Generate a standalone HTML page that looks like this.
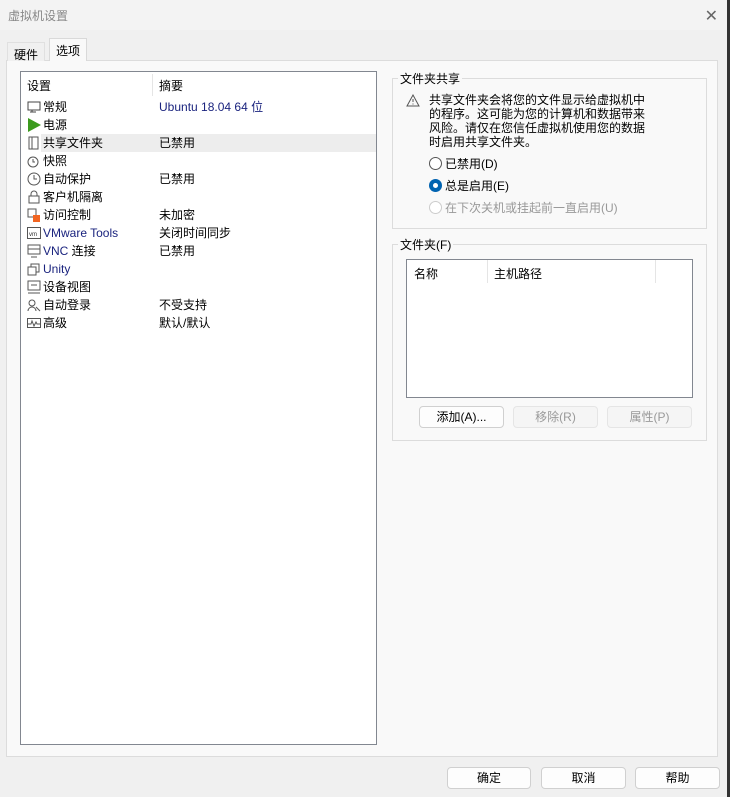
<!DOCTYPE html>
<html><head><meta charset="utf-8"><style>
*{margin:0;padding:0;box-sizing:border-box}
body{width:730px;height:797px;background:#f0f0f0;font:12px "Liberation Sans","Noto Sans CJK SC",sans-serif;color:#000;position:relative;overflow:hidden}
.a{position:absolute}
.title{left:0;top:0;width:730px;height:30px;background:#f3f3f3}
.title span{position:absolute;left:8px;top:7px;color:#888;font-size:12px}
.close{right:12px;top:6px;font-size:16px;color:#666}
.tab{top:40px;height:21px;padding:3px 6px;border:1px solid #d9d9d9;border-bottom:none;background:#f0f0f0}
.panel{left:6px;top:60px;width:712px;height:697px;background:#f9f9f9;border:1px solid #dcdcdc}
.list{left:20px;top:71px;width:357px;height:674px;background:#fff;border:1px solid #828790}
.row{position:absolute;left:0;width:355px;height:18px;line-height:18px}
.row .n{position:absolute;left:22px}
.row .s{position:absolute;left:138px}
.row .ic{position:absolute;left:6px;top:2px;width:14px;height:14px}
.grp{border:1px solid #dcdcdc}
.gl{background:#f9f9f9;padding:0 2px}
.btn{background:#fdfdfd;border:1px solid #d0d0d0;border-radius:4px;text-align:center;line-height:20px;height:22px}
.dis{background:#f5f5f5;color:#999;border-color:#e5e5e5}
.rad{width:13px;height:13px;border-radius:50%;border:1px solid #555;background:#fff}
</style></head><body>
<div class="a title"><span>虚拟机设置</span></div>
<div class="a close">✕</div>
<div class="a panel"></div>
<div class="a tab" style="left:7px;top:42px;height:19px;border-color:#e0e0e0">硬件</div>
<div class="a tab" style="left:49px;top:38px;height:23px;background:#f9f9f9;padding-top:3px">选项</div>
<div class="a list">
 <div class="row" style="top:5px"><span class="s" style="left:6px">设置</span><span class="s">摘要</span></div>
 <div class="a" style="left:131px;top:2px;width:1px;height:22px;background:#e5e5e5"></div>
 <div class="row" style="top:26px"><svg class="ic" viewBox="0 0 14 14"><rect x="1" y="2" width="12" height="8" fill="none" stroke="#444"/><path d="M3 12h6M5 10v2" stroke="#444"/></svg><span class="n">常规</span><span class="s" style="color:#1a237e">Ubuntu 18.04 64 位</span></div>
 <div class="row" style="top:44px"><svg class="ic" viewBox="0 0 14 14"><path d="M1 0L14 7L1 14Z" fill="#3c9a1e"/></svg><span class="n">电源</span></div>
 <div class="row" style="top:62px;background:#ededed;left:20px;width:335px"></div>
 <div class="row" style="top:62px"><svg class="ic" viewBox="0 0 14 14"><path d="M2 1h9v12H2zM5 1v12" fill="none" stroke="#555"/></svg><span class="n">共享文件夹</span><span class="s">已禁用</span></div>
 <div class="row" style="top:80px"><svg class="ic" viewBox="0 0 14 14"><circle cx="6" cy="8" r="5" fill="none" stroke="#555"/><path d="M6 5v3h2" stroke="#555" fill="none"/></svg><span class="n">快照</span></div>
 <div class="row" style="top:98px"><svg class="ic" viewBox="0 0 14 14"><circle cx="7" cy="7" r="6" fill="none" stroke="#555"/><path d="M7 3v4h3" stroke="#555" fill="none"/></svg><span class="n">自动保护</span><span class="s">已禁用</span></div>
 <div class="row" style="top:116px"><svg class="ic" viewBox="0 0 14 14"><rect x="2" y="6" width="10" height="7" fill="none" stroke="#555"/><path d="M4 6V4a3 3 0 0 1 6 0v2" fill="none" stroke="#555"/></svg><span class="n">客户机隔离</span></div>
 <div class="row" style="top:134px"><svg class="ic" viewBox="0 0 14 14"><path d="M1 1h8v8H1z" fill="none" stroke="#555"/><rect x="6" y="7" width="7" height="7" fill="#f26522"/></svg><span class="n">访问控制</span><span class="s">未加密</span></div>
 <div class="row" style="top:152px"><svg class="ic" viewBox="0 0 14 14"><rect x="0.5" y="1.5" width="13" height="11" fill="none" stroke="#555"/><text x="2" y="10" font-size="6" fill="#333">vm</text></svg><span class="n" style="color:#1a237e">VMware Tools</span><span class="s">关闭时间同步</span></div>
 <div class="row" style="top:170px"><svg class="ic" viewBox="0 0 14 14"><rect x="1" y="1" width="12" height="9" fill="none" stroke="#555"/><path d="M4 13h6M1 5h12" stroke="#555"/></svg><span class="n" style="color:#1a237e">VNC <span style="color:#000">连接</span></span><span class="s">已禁用</span></div>
 <div class="row" style="top:188px"><svg class="ic" viewBox="0 0 14 14"><rect x="1" y="5" width="8" height="8" fill="none" stroke="#555"/><path d="M4 5V2h8v8H9" fill="none" stroke="#555"/></svg><span class="n" style="color:#1a237e">Unity</span></div>
 <div class="row" style="top:206px"><svg class="ic" viewBox="0 0 14 14"><rect x="1" y="1" width="12" height="9" fill="none" stroke="#555"/><path d="M1 13h12M4 5h6" stroke="#555"/></svg><span class="n">设备视图</span></div>
 <div class="row" style="top:224px"><svg class="ic" viewBox="0 0 14 14"><circle cx="5" cy="5" r="3" fill="none" stroke="#555"/><path d="M1 13a4 4 0 0 1 8 0M9 9l4 4" fill="none" stroke="#555"/></svg><span class="n">自动登录</span><span class="s">不受支持</span></div>
 <div class="row" style="top:242px"><svg class="ic" viewBox="0 0 14 14"><rect x="0.5" y="2.5" width="13" height="9" fill="none" stroke="#555"/><path d="M1 8h3l1-3 2 5 2-4 1 2h3" fill="none" stroke="#555"/></svg><span class="n">高级</span><span class="s">默认/默认</span></div>
</div>

<div class="a grp" style="left:392px;top:78px;width:315px;height:151px"></div>
<div class="a gl" style="left:398px;top:70px">文件夹共享</div>
<svg class="a" style="left:406px;top:94px" width="14" height="13" viewBox="0 0 14 13"><path d="M7 1L13 12H1Z" fill="none" stroke="#555"/><path d="M7 5v3M7 9.5v1" stroke="#555"/></svg>
<div class="a" style="left:429px;top:93px;line-height:14px;width:230px">共享文件夹会将您的文件显示给虚拟机中<br>的程序。这可能为您的计算机和数据带来<br>风险。请仅在您信任虚拟机使用您的数据<br>时启用共享文件夹。</div>
<div class="a rad" style="left:429px;top:157px"></div><div class="a" style="left:445px;top:155px">已禁用(D)</div>
<div class="a rad" style="left:429px;top:179px;background:#0063b1;border:none"><div style="position:absolute;left:4px;top:4px;width:5px;height:5px;border-radius:50%;background:#fff"></div></div><div class="a" style="left:445px;top:177px">总是启用(E)</div>
<div class="a rad" style="left:429px;top:201px;border-color:#ccc"></div><div class="a" style="left:445px;top:199px;color:#999">在下次关机或挂起前一直启用(U)</div>

<div class="a grp" style="left:392px;top:244px;width:315px;height:197px"></div>
<div class="a gl" style="left:398px;top:236px">文件夹(F)</div>
<div class="a" style="left:406px;top:259px;width:287px;height:139px;background:#fff;border:1px solid #828790"></div>
<div class="a" style="left:414px;top:265px">名称</div>
<div class="a" style="left:487px;top:260px;width:1px;height:23px;background:#e5e5e5"></div>
<div class="a" style="left:494px;top:265px">主机路径</div>
<div class="a" style="left:655px;top:260px;width:1px;height:23px;background:#e5e5e5"></div>
<div class="a btn" style="left:419px;top:406px;width:85px">添加(A)...</div>
<div class="a btn dis" style="left:513px;top:406px;width:85px">移除(R)</div>
<div class="a btn dis" style="left:607px;top:406px;width:85px">属性(P)</div>

<div class="a btn" style="left:447px;top:767px;width:84px">确定</div>
<div class="a btn" style="left:541px;top:767px;width:85px">取消</div>
<div class="a btn" style="left:635px;top:767px;width:85px">帮助</div>
<div class="a" style="left:727px;top:0;width:3px;height:797px;background:#333"></div>
</body></html>
